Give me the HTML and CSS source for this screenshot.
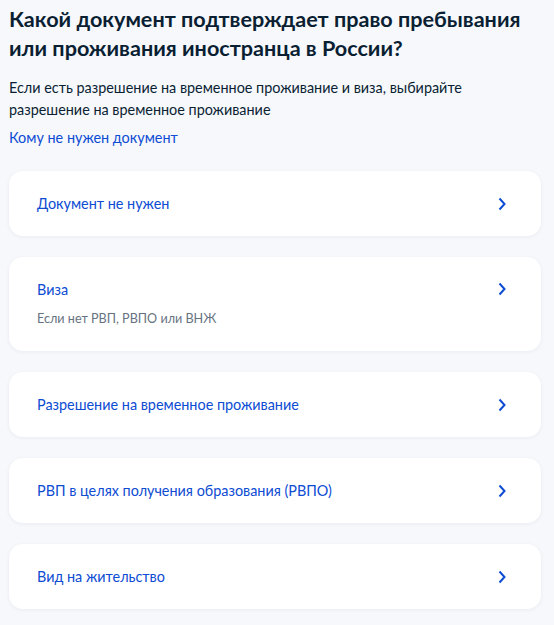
FILE: index.html
```html
<!DOCTYPE html>
<html lang="ru">
<head>
    <meta charset="UTF-8">
    <meta name="viewport" content="width=device-width, initial-scale=1.0">
    <title>Документ иностранца</title>
    <link rel="stylesheet" href="styles.css">
</head>
<body>
    <div class="container">
        <h1>Какой документ подтверждает право пребывания или проживания иностранца в России?</h1>
        <p class="hint">Если есть разрешение на временное проживание и виза, выбирайте разрешение на временное проживание</p>
        <a class="link" href="#">Кому не нужен документ</a>

        <div class="options">
            <a class="option" href="#">
                <div class="option-text">
                    <span class="option-title">Документ не нужен</span>
                </div>
                <svg class="chevron" viewBox="0 0 8 14"><path d="M1.5 1.5 L6.5 7 L1.5 12.5"/></svg>
            </a>
            <a class="option option-top" href="#">
                <div class="option-text">
                    <span class="option-title">Виза</span>
                    <span class="option-sub">Если нет РВП, РВПО или ВНЖ</span>
                </div>
                <svg class="chevron" viewBox="0 0 8 14"><path d="M1.5 1.5 L6.5 7 L1.5 12.5"/></svg>
            </a>
            <a class="option" href="#">
                <div class="option-text">
                    <span class="option-title">Разрешение на временное проживание</span>
                </div>
                <svg class="chevron" viewBox="0 0 8 14"><path d="M1.5 1.5 L6.5 7 L1.5 12.5"/></svg>
            </a>
            <a class="option" href="#">
                <div class="option-text">
                    <span class="option-title">РВП в целях получения образования (РВПО)</span>
                </div>
                <svg class="chevron" viewBox="0 0 8 14"><path d="M1.5 1.5 L6.5 7 L1.5 12.5"/></svg>
            </a>
            <a class="option" href="#">
                <div class="option-text">
                    <span class="option-title">Вид на жительство</span>
                </div>
                <svg class="chevron" viewBox="0 0 8 14"><path d="M1.5 1.5 L6.5 7 L1.5 12.5"/></svg>
            </a>
        </div>
    </div>
</body>
</html>
```

FILE: styles.css
```css
body {
    font-family: Lato, "Noto Sans", sans-serif;
    background-color: #f6f8fc;
    color: #0b1f33;
    margin: 0;
    padding: 0;
}
.container {
    padding: 5px 13px 16px 9px;
}
h1 {
    font-size: 21.6px;
    line-height: 29px;
    font-weight: 700;
    margin: 0 0 14px;
}
.hint {
    font-size: 14.4px;
    line-height: 22px;
    margin: 0 0 6px;
}
.link {
    display: block;
    font-size: 14.4px;
    line-height: 22px;
    color: #0d4cd3;
    text-decoration: none;
}
.options {
    display: flex;
    flex-direction: column;
    gap: 21px;
    margin-top: 22px;
}
.option {
    display: flex;
    align-items: center;
    justify-content: space-between;
    background: #fff;
    border-radius: 14px;
    padding: 22px 35px 22px 28px;
    box-shadow: 0 1px 4px rgba(11, 31, 51, 0.06);
    text-decoration: none;
}
.option-top {
    align-items: flex-start;
}
.option-text {
    display: flex;
    flex-direction: column;
    gap: 8px;
}
.option-title {
    font-size: 14.4px;
    line-height: 21px;
    color: #0d4cd3;
}
.option-sub {
    font-size: 12.6px;
    line-height: 21px;
    color: #66727f;
}
.chevron {
    width: 8px;
    height: 14px;
    fill: none;
    stroke: #0d4cd3;
    stroke-width: 2;
}
.option-top .chevron {
    margin-top: 3px;
}
```
